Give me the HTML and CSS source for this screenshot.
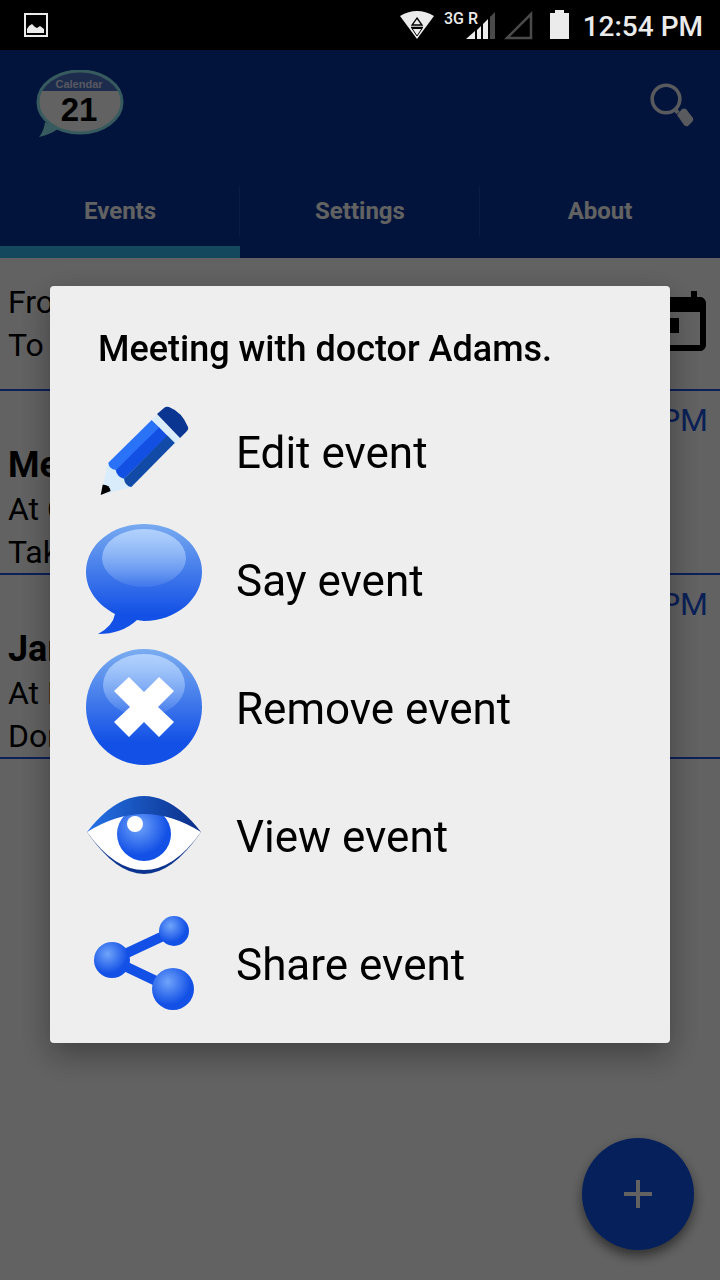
FILE: index.html
```html
<!DOCTYPE html>
<html lang="en">
    <head>
        <meta charset="utf-8" />
        <meta name="viewport" content="width=device-width,initial-scale=1" />
        <title>Calendar</title>
        <link rel="stylesheet" href="styles.css">
    </head>

    <body>
        <div class="status-bar">
            <svg class="status-picture" width="24" height="24" viewBox="0 0 24 24">
                <rect x="1" y="1" width="22" height="22" fill="none" stroke="#ebebeb" stroke-width="2" />
                <path d="M3 20v-4l2-3 3-2 3 3 2 1 3-2 4 3v4z" fill="#ebebeb" />
            </svg>
            <svg width="34" height="30" viewBox="0 0 34 30">
                <path d="M0 6Q17-4 34 6L17 29z" fill="#ebebeb" />
                <path d="M17 8l5 7H12zM11 17.5h12" fill="none" stroke="#000" stroke-width="1.3" />
                <path d="M12 18.5h10L17 26z" fill="none" stroke="#000" stroke-width="1" />
            </svg>
            <svg class="status-signal" width="52" height="30" viewBox="0 0 52 30">
                <path d="M22 29l9-8v8zM33 20l4-4v13h-4zM39 14l5-5v20h-5z" fill="#ebebeb" />
                <path d="M46 7l5-5v27h-5z" fill="#4a4a4a" />
                <text x="0" y="14" class="signal-label">3G R</text>
            </svg>
            <svg class="status-empty" width="30" height="30" viewBox="0 0 30 30">
                <path d="M3 28L27 4v24z" fill="none" stroke="#4a4a4a" stroke-width="2.5" />
            </svg>
            <svg class="status-battery" width="19" height="30" viewBox="0 0 19 30">
                <path d="M0 3h5V0h9v3h5v26H0z" fill="#ebebeb" />
            </svg>
            <span class="clock">12:54 PM</span>
        </div>

        <div class="app">
            <header class="app-header">
                <svg class="logo" width="90" height="70" viewBox="0 0 90 70">
                    <path d="M10 52Q9 61 4 67Q14 65 23 59z" fill="#8ae0ea" />
                    <ellipse cx="45" cy="32" rx="42" ry="31" fill="#f4f4f4" />
                    <path d="M6 21Q17 1 45 1T84 21z" fill="#4a6fc0" />
                    <ellipse cx="45" cy="32" rx="42" ry="31" fill="none" stroke="#8ae0ea" stroke-width="3" />
                    <text x="44" y="18" class="logo-name">Calendar</text>
                    <text x="44" y="51" class="logo-day">21</text>
                </svg>
                <button class="search-button" type="button" aria-label="Search">
                    <svg width="46" height="46" viewBox="0 0 46 46">
                        <circle cx="17" cy="17" r="13.8" fill="none" stroke="#dfe2ea" stroke-width="3.6" />
                        <path d="M26 27l3 4" stroke="#dfe2ea" stroke-width="4" />
                        <path d="M28 33l5-6q2-1 4 0l7 9q1 2-1 4l-4 4q-2 1-4-1z" fill="#dfe2ea" />
                    </svg>
                </button>
            </header>

            <nav class="tabs">
                <a class="tab active" href="#events">Events</a>
                <a class="tab" href="#settings">Settings</a>
                <a class="tab" href="#about">About</a>
            </nav>

            <main>
                <div class="filter">
                    <div>
                        <div>From</div>
                        <div>To</div>
                    </div>
                    <svg width="72" height="72" viewBox="0 0 24 24">
                        <path d="M19 3h-1V1h-2v2H8V1H6v2H5c-1.11 0-1.99.9-1.99 2L3 19c0 1.1.89 2 2 2h14c1.1 0 2-.9 2-2V5c0-1.1-.9-2-2-2zm0 16H5V8h14v11zM7 10h5v5H7z" />
                    </svg>
                </div>
                <article class="event">
                    <div class="event-time">PM</div>
                    <h2 class="event-title">Meet</h2>
                    <div>At C</div>
                    <div>Take</div>
                </article>
                <article class="event">
                    <div class="event-time">PM</div>
                    <h2 class="event-title">Jan</h2>
                    <div>At H</div>
                    <div>Don</div>
                </article>
            </main>

            <button class="add-button" type="button" aria-label="Add event">
                <svg width="28" height="28" viewBox="0 0 28 28">
                    <path d="M12 0h4v12h12v4H16v12h-4V16H0v-4h12z" fill="#f5f5f5" />
                </svg>
            </button>
        </div>

        <div class="overlay">
            <div class="dialog" role="dialog" aria-labelledby="dialog-title">
                <h1 class="dialog-title" id="dialog-title">Meeting with doctor Adams.</h1>
                <button class="action" type="button">
                    <svg width="128" height="128" viewBox="0 0 128 128">
                        <path d="M28 74L20.7 106L52 98L48 80z" fill="#d9ecfc" />
                        <path d="M22.7 95.7Q29 95 30.7 102L20.7 106z" fill="#000" />
                        <path d="M71.7 31L28.3 73.7Q29 80 36 81L80 39z" fill="#2a72f8" />
                        <path d="M79.3 38.3L35.7 81Q37 88 44 89.7L88 47z" fill="#1250e4" />
                        <path d="M87.7 46.3L44 89.7Q45 97 51.3 98L95 53.7z" fill="#124aa8" />
                        <path d="M72 31l5-5 23 23-5 5z" fill="#d9ecfc" />
                        <path d="M77 25L84 19Q86 17 89 18Q102 23 108 38Q109 40 107 42L100 49z" fill="#0a3590" />
                    </svg>
                    <span>Edit event</span>
                </button>
                <button class="action" type="button">
                    <svg width="128" height="128" viewBox="0 0 128 128">
                        <defs>
                            <linearGradient id="bubble" x1="0" y1="7" x2="0" y2="108" gradientUnits="userSpaceOnUse">
                                <stop offset="0" stop-color="#78aaf0" />
                                <stop offset=".9" stop-color="#1250e6" />
                            </linearGradient>
                            <linearGradient id="shine" x1="0" y1="0" x2="0" y2="1">
                                <stop offset="0" stop-color="#b8d6ff" stop-opacity=".9" />
                                <stop offset="1" stop-color="#b8d6ff" stop-opacity=".1" />
                            </linearGradient>
                        </defs>
                        <path d="M64 7C96 7 122 28 122 55S96 104 64 104L57 103Q42 117 18 117Q33 109 35 97C18 88 6 73 6 55C6 28 32 7 64 7z" fill="url(#bubble)" />
                        <ellipse cx="64" cy="41" rx="42" ry="29" fill="url(#shine)" />
                    </svg>
                    <span>Say event</span>
                </button>
                <button class="action" type="button">
                    <svg width="128" height="128" viewBox="0 0 128 128">
                        <circle cx="64" cy="62" r="58" fill="url(#bubble)" />
                        <ellipse cx="64" cy="40" rx="41" ry="31" fill="url(#shine)" />
                        <path d="M49 32L64 47L79 32L94 46L78 62L94 77L79 92L64 77L49 92L34 77L50 62L34 46z" fill="#fff" />
                    </svg>
                    <span>Remove event</span>
                </button>
                <button class="action" type="button">
                    <svg width="128" height="128" viewBox="0 0 128 128">
                        <defs>
                            <linearGradient id="lid" x1="0" y1="0" x2="1" y2="0">
                                <stop offset="0" stop-color="#2472e8" />
                                <stop offset="1" stop-color="#0a2d86" />
                            </linearGradient>
                            <radialGradient id="iris" cx=".4" cy=".35" r=".55">
                                <stop offset="0" stop-color="#70a4fa" />
                                <stop offset="1" stop-color="#1250e6" />
                            </radialGradient>
                        </defs>
                        <path d="M7 59Q36 101 64 101T121 59L64 50z" fill="#0b348f" />
                        <path d="M7 59Q35 39 64 39T121 59Q94 97 64 97T7 59z" fill="#fff" />
                        <circle cx="64" cy="61" r="27" fill="url(#iris)" />
                        <circle cx="55" cy="51" r="8" fill="#fff" />
                        <path d="M7 59Q35 23 64 23T121 59Q92 41 64 41T7 59z" fill="url(#lid)" />
                    </svg>
                    <span>View event</span>
                </button>
                <button class="action" type="button">
                    <svg width="128" height="128" viewBox="0 0 128 128">
                        <defs>
                            <radialGradient id="ball" cx=".38" cy=".33" r=".55">
                                <stop offset="0" stop-color="#70a4fa" />
                                <stop offset="1" stop-color="#1250e6" />
                            </radialGradient>
                        </defs>
                        <path d="M94 30L32 59L93 88" fill="none" stroke="#1250e6" stroke-width="10" />
                        <circle cx="32" cy="59" r="18" fill="url(#ball)" />
                        <circle cx="94" cy="30" r="15" fill="url(#ball)" />
                        <circle cx="93" cy="88" r="21" fill="url(#ball)" />
                    </svg>
                    <span>Share event</span>
                </button>
            </div>
        </div>
    </body>
</html>
```
FILE: styles.css
```css
* {
    box-sizing: border-box;
}
body {
    margin: 0;
    min-height: 100vh;
    display: flex;
    flex-direction: column;
    font-family: Roboto, "Liberation Sans", sans-serif;
    color: #000000;
    background: #f5f5f5;
}
button {
    padding: 0;
    border: 0;
    background: none;
    font-family: inherit;
    color: inherit;
    cursor: pointer;
}
svg {
    display: block;
    flex: none;
}
.status-bar {
    display: flex;
    align-items: center;
    height: 50px;
    padding: 0 17px 0 24px;
    background: #000000;
    color: #ebebeb;
}
.status-picture {
    margin-right: auto;
}
.status-signal {
    margin-left: 10px;
}
.status-empty {
    margin-left: 8px;
}
.status-battery {
    margin: 0 14px 0 16px;
}
.signal-label {
    font-size: 16px;
    font-weight: 500;
    fill: #ebebeb;
}
.clock {
    padding-top: 4px;
    font-size: 28px;
    font-weight: 500;
    line-height: 32px;
}
.app {
    position: relative;
    flex: 1;
}
.app-header {
    display: flex;
    align-items: center;
    justify-content: space-between;
    height: 112px;
    padding: 0 25px 2px 35px;
    background: #053394;
}
.logo-name {
    font: bold 11px "Liberation Sans", sans-serif;
    text-anchor: middle;
    fill: #d8dcf0;
}
.logo-day {
    font: bold 33px "Liberation Sans", sans-serif;
    text-anchor: middle;
    fill: #000000;
}
.tabs {
    display: flex;
    height: 96px;
    background: #053394;
}
.tab {
    flex: 1;
    padding-top: 33px;
    border-bottom: 12px solid transparent;
    font-size: 24px;
    font-weight: bold;
    line-height: 32px;
    text-align: center;
    text-decoration: none;
    color: #f5f5f5;
    background: linear-gradient(#1c44a6, #1c44a6) right 24px / 1px 50px no-repeat;
}
.tab:last-child {
    background: none;
}
.tab.active {
    border-bottom-color: #33b5e5;
}
.filter {
    display: flex;
    align-items: center;
    justify-content: space-between;
    padding: 23px 5px 22px 8px;
    border-bottom: 2px solid #1a50d8;
    font-size: 32px;
    line-height: 43px;
}
.event {
    padding: 8px 12px 0 8px;
    border-bottom: 2px solid #1a50d8;
    font-size: 32px;
    line-height: 43px;
}
.event-time {
    text-align: right;
    color: #1a50d8;
}
.event-title {
    margin: 0;
    font-size: 36px;
    line-height: 46px;
}
.event div:last-child {
    height: 42px;
}
.add-button {
    position: absolute;
    right: 26px;
    bottom: 30px;
    display: flex;
    align-items: center;
    justify-content: center;
    width: 112px;
    height: 112px;
    border-radius: 50%;
    background: #0f52e6;
    box-shadow: 0 6px 12px rgba(0, 0, 0, 0.5);
}
.overlay {
    position: fixed;
    top: 50px;
    right: 0;
    bottom: 0;
    left: 0;
    display: flex;
    align-items: center;
    padding: 0 50px 2px;
    background: rgba(0, 0, 0, 0.6);
}
.dialog {
    flex: 1;
    padding-bottom: 14px;
    border-radius: 4px;
    background: #eeeeee;
    box-shadow: 0 12px 32px rgba(0, 0, 0, 0.35);
}
.dialog-title {
    margin: 0;
    padding: 42px 48px 19px;
    font-size: 36px;
    font-weight: 500;
    line-height: 42px;
}
.action {
    display: flex;
    align-items: center;
    gap: 28px;
    width: 100%;
    padding: 0 30px;
    font-size: 44px;
    line-height: 52px;
    text-align: left;
}
```
